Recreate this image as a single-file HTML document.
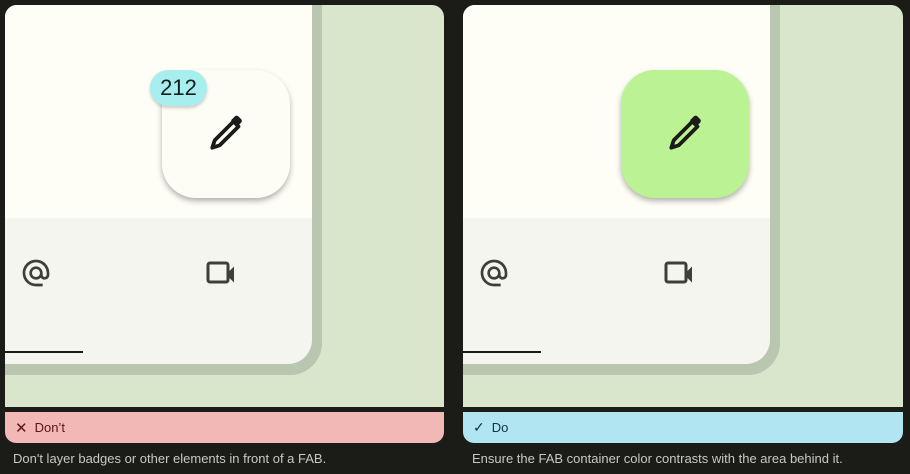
<!DOCTYPE html>
<html><head><style>
*{margin:0;padding:0;box-sizing:border-box}
body{width:910px;height:474px;background:#1b1c18;position:relative;overflow:hidden;font-family:"Liberation Sans",sans-serif}
.card{position:absolute;top:5px;width:439px;height:402px;background:#dae6cb;border-radius:12px 12px 0 0;overflow:hidden}
.phone{position:absolute;left:-20px;top:-20px;width:337px;height:390px;background:#b9c7b0;border-radius:0 0 32px 0}
.scr{position:absolute;left:0;top:0;width:327px;height:379px;background:#f3f5ee;border-radius:0 0 24px 0;overflow:hidden}
.top{position:absolute;left:0;top:0;width:327px;height:233px;background:#fefef6}
.fab{position:absolute;top:65px;width:128px;height:128px;border-radius:34px;box-shadow:0 3px 6px rgba(0,0,0,.3);display:flex;align-items:center;justify-content:center}
.ban{position:absolute;top:412px;width:439px;height:31px;border-radius:0 0 11px 11px;font-size:13px;display:flex;align-items:center;padding-left:10px}
.cap{position:absolute;top:451px;font-size:13px;color:#c8c9c0}
.line{position:absolute;left:0;top:366px;width:78px;height:2px;background:#1b1c18}
.ic{position:absolute}
</style></head><body>
<div class="card" style="left:5px">
 <div class="phone"><div class="scr"><div class="top"></div>
  <svg class="ic" style="left:35px;top:272px" width="32" height="32" viewBox="0 0 24 24"><path fill="#3d3f38" d="M12 2C6.48 2 2 6.48 2 12s4.48 10 10 10h5v-2h-5c-4.34 0-8-3.66-8-8s3.66-8 8-8 8 3.66 8 8v1.43c0 .79-.71 1.570-1.5 1.57s-1.5-.78-1.5-1.57V12c0-2.76-2.24-5-5-5s-5 2.24-5 5 2.24 5 5 5c1.38 0 2.64-.56 3.54-1.47.65.89 1.77 1.47 2.96 1.47 1.97 0 3.5-1.6 3.5-3.57V12c0-5.52-4.48-10-10-10zm0 13c-1.66 0-3-1.34-3-3s1.34-3 3-3 3 1.34 3 3-1.34 3-3 3z"/></svg>
  <svg class="ic" style="left:221px;top:275px" width="32" height="28" viewBox="0 0 32 28"><rect x="2" y="3" width="20" height="19" rx="2" fill="none" stroke="#3d3f38" stroke-width="3"/><path fill="#3d3f38" d="M22 12.5l6-6v16l-6-6z"/></svg>
  <div class="line" style="left:20px"></div>
 </div></div>
 <div class="fab" style="left:157px;background:#fdfdf6"><svg width="50" height="50" viewBox="0 0 40 40"><path d="M9 31l2-6 15-15 4 4-15 15z" fill="none" stroke="#1b1c18" stroke-width="3" stroke-linejoin="round"/><path d="M24 9l3-3a2 2 0 0 1 3 0l2 2a2 2 0 0 1 0 3l-3 3z" fill="#1b1c18"/><path d="M8 32l1-6 5 5z" fill="#1b1c18"/></svg></div>
 <div style="position:absolute;left:145px;top:65px;width:57px;height:36px;border-radius:18px;background:#a8eeee;box-shadow:0 2px 3px rgba(0,0,0,.2);font-size:22px;color:#10201f;display:flex;align-items:center;justify-content:center">212</div>
</div>
<div class="ban" style="left:5px;background:#f2b8b5;color:#601410"><span style="font-size:15px;margin-right:7px">✕</span>Don’t</div>
<div class="cap" style="left:13px">Don't layer badges or other elements in front of a FAB.</div>

<div class="card" style="left:463px;width:440px">
 <div class="phone"><div class="scr"><div class="top"></div>
  <svg class="ic" style="left:35px;top:272px" width="32" height="32" viewBox="0 0 24 24"><path fill="#3d3f38" d="M12 2C6.48 2 2 6.48 2 12s4.48 10 10 10h5v-2h-5c-4.34 0-8-3.66-8-8s3.66-8 8-8 8 3.66 8 8v1.43c0 .79-.71 1.57-1.5 1.57s-1.5-.78-1.5-1.57V12c0-2.76-2.24-5-5-5s-5 2.24-5 5 2.24 5 5 5c1.38 0 2.64-.56 3.54-1.47.65.89 1.77 1.47 2.96 1.47 1.97 0 3.5-1.6 3.5-3.57V12c0-5.52-4.48-10-10-10zm0 13c-1.66 0-3-1.34-3-3s1.34-3 3-3 3 1.34 3 3-1.34 3-3 3z"/></svg>
  <svg class="ic" style="left:221px;top:275px" width="32" height="28" viewBox="0 0 32 28"><rect x="2" y="3" width="20" height="19" rx="2" fill="none" stroke="#3d3f38" stroke-width="3"/><path fill="#3d3f38" d="M22 12.5l6-6v16l-6-6z"/></svg>
  <div class="line" style="left:20px"></div>
 </div></div>
 <div class="fab" style="left:158px;background:#bbf294"><svg width="50" height="50" viewBox="0 0 40 40"><path d="M9 31l2-6 15-15 4 4-15 15z" fill="none" stroke="#1b1c18" stroke-width="3" stroke-linejoin="round"/><path d="M24 9l3-3a2 2 0 0 1 3 0l2 2a2 2 0 0 1 0 3l-3 3z" fill="#1b1c18"/><path d="M8 32l1-6 5 5z" fill="#1b1c18"/></svg></div>
</div>
<div class="ban" style="left:463px;width:440px;background:#b2e5f2;color:#0f3540"><span style="font-size:14px;margin-right:7px">✓</span>Do</div>
<div class="cap" style="left:472px">Ensure the FAB container color contrasts with the area behind it.</div>
</body></html>
